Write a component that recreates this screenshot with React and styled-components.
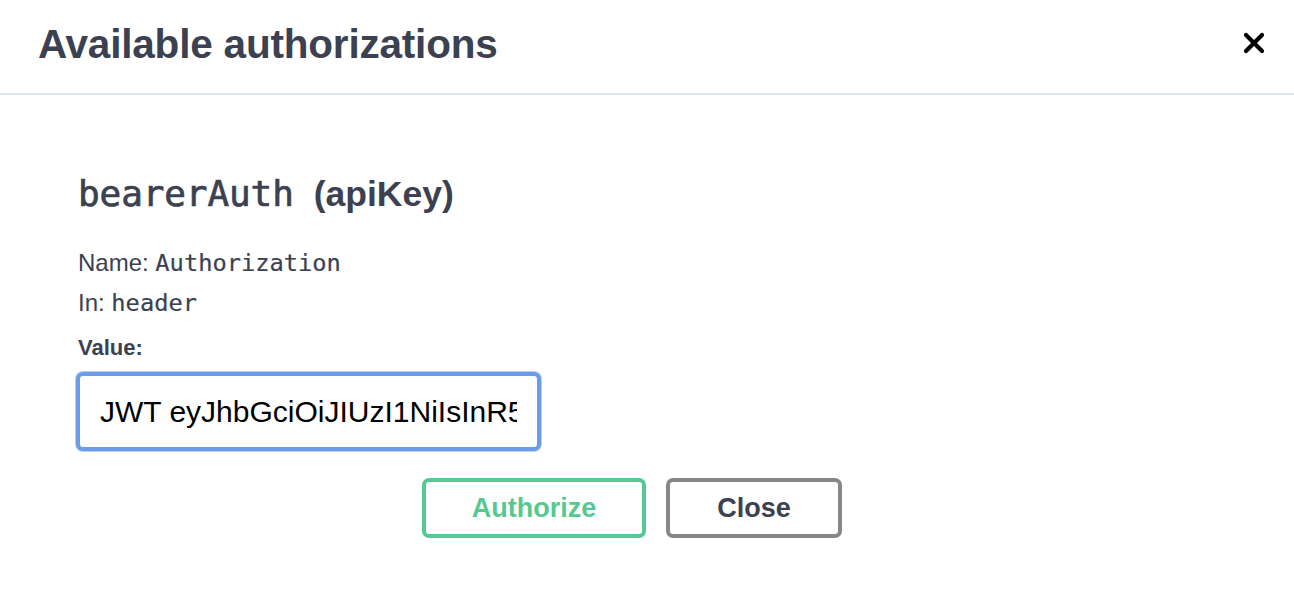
import React, { useState } from "react";
import styled, { createGlobalStyle } from "styled-components";

const GlobalStyle = createGlobalStyle`
  html, body {
    margin: 0;
    padding: 0;
    background: #ffffff;
  }
  body {
    font-family: "Liberation Sans", Arial, sans-serif;
    color: #3b4151;
  }
`;

const App = () => {
  const [token, setToken] = useState(
    "JWT eyJhbGciOiJIUzI1NiIsInR5cCI6IkpXVCJ9.eyJzdWIiOiIxMjM0NTY3ODkwIn0"
  );

  return (
    <>
      <GlobalStyle />
      <Modal>
        {/* header */}
        <Header>
          <Title>Available authorizations</Title>
          <CloseIcon aria-label="Close">
            <svg width="22" height="22" viewBox="0 0 22 22">
              <path
                d="M3 3 L19 19 M19 3 L3 19"
                stroke="#000"
                strokeWidth="4.2"
                strokeLinecap="round"
              />
            </svg>
          </CloseIcon>
        </Header>

        {/* body */}
        <Body>
          <SchemeTitle>
            <Code>bearerAuth</Code>
            <Kind>(apiKey)</Kind>
          </SchemeTitle>

          <Meta>
            Name: <MetaCode>Authorization</MetaCode>
          </Meta>
          <Meta>
            In: <MetaCode>header</MetaCode>
          </Meta>

          <Label>Value:</Label>
          <Input
            type="text"
            value={token}
            onChange={(e) => setToken(e.target.value)}
          />

          <Buttons>
            <Button $tone="green">Authorize</Button>
            <Button $tone="gray">Close</Button>
          </Buttons>
        </Body>
      </Modal>
    </>
  );
};

export default App;

/* -------------------- STYLES -------------------- */

const Modal = styled.div`
  width: 1294px;
  height: 612px;
  background: #fff;
  overflow: hidden;
`;

const Header = styled.div`
  height: 93px;
  display: flex;
  align-items: center;
  justify-content: space-between;
  padding: 0 28px 0 38px;
  border-bottom: 2px solid #dfe5ee;
`;

const Title = styled.h4`
  margin: 0;
  font-size: 40.5px;
  font-weight: 700;
  color: #3b4151;
  letter-spacing: -0.2px;
  position: relative;
  top: -2px;
`;

const CloseIcon = styled.button`
  border: none;
  background: none;
  padding: 0;
  width: 24px;
  height: 24px;
  display: flex;
  align-items: center;
  justify-content: center;
  cursor: pointer;
  position: relative;
  top: -4px;
`;

const Body = styled.div`
  padding: 77px 0 0 78px;
`;

const SchemeTitle = styled.h4`
  margin: 0 0 33px;
  display: flex;
  align-items: baseline;
  gap: 20px;
  line-height: 44px;
  color: #3b4151;
`;

const Code = styled.code`
  font-family: "DejaVu Sans Mono", monospace;
  font-size: 36px;
  font-weight: 400;
  letter-spacing: -0.1px;
  -webkit-text-stroke: 0.7px #3b4151;
`;

const Kind = styled.span`
  font-size: 35.5px;
  font-weight: 700;
`;

const Meta = styled.div`
  font-size: 24px;
  line-height: 28px;
  margin-bottom: 12px;
  color: #3b4151;
`;

const MetaCode = styled.code`
  font-family: "DejaVu Sans Mono", monospace;
  font-size: 23.7px;
  -webkit-text-stroke: 0.2px #3b4151;
`;

const Label = styled.div`
  font-size: 22px;
  font-weight: 700;
  line-height: 26px;
  margin: 18px 0 11px;
  color: #3b4151;
`;

const Input = styled.input`
  box-sizing: border-box;
  width: 465px;
  height: 79px;
  margin-left: -2px;
  padding: 0 20px;
  border: 4px solid #6b9ce9;
  border-radius: 7px;
  box-shadow: 0 0 0 1px #b8cff3;
  outline: none;
  font-family: "Liberation Sans", Arial, sans-serif;
  font-size: 30px;
  color: #000;
  background: #fff;
`;

const Buttons = styled.div`
  display: flex;
  justify-content: center;
  gap: 20px;
  margin: 27px 0 0 -78px;
  padding-right: 30px;
`;

const Button = styled.button`
  box-sizing: border-box;
  width: ${(p) => (p.$tone === "green" ? "224px" : "176px")};
  height: 60px;
  border-radius: 7px;
  border: 4px solid ${(p) => (p.$tone === "green" ? "#55c991" : "#86878b")};
  background: #fff;
  color: ${(p) => (p.$tone === "green" ? "#55c991" : "#3b4151")};
  font-family: "Liberation Sans", Arial, sans-serif;
  font-size: 27px;
  font-weight: 700;
  cursor: pointer;
`;
